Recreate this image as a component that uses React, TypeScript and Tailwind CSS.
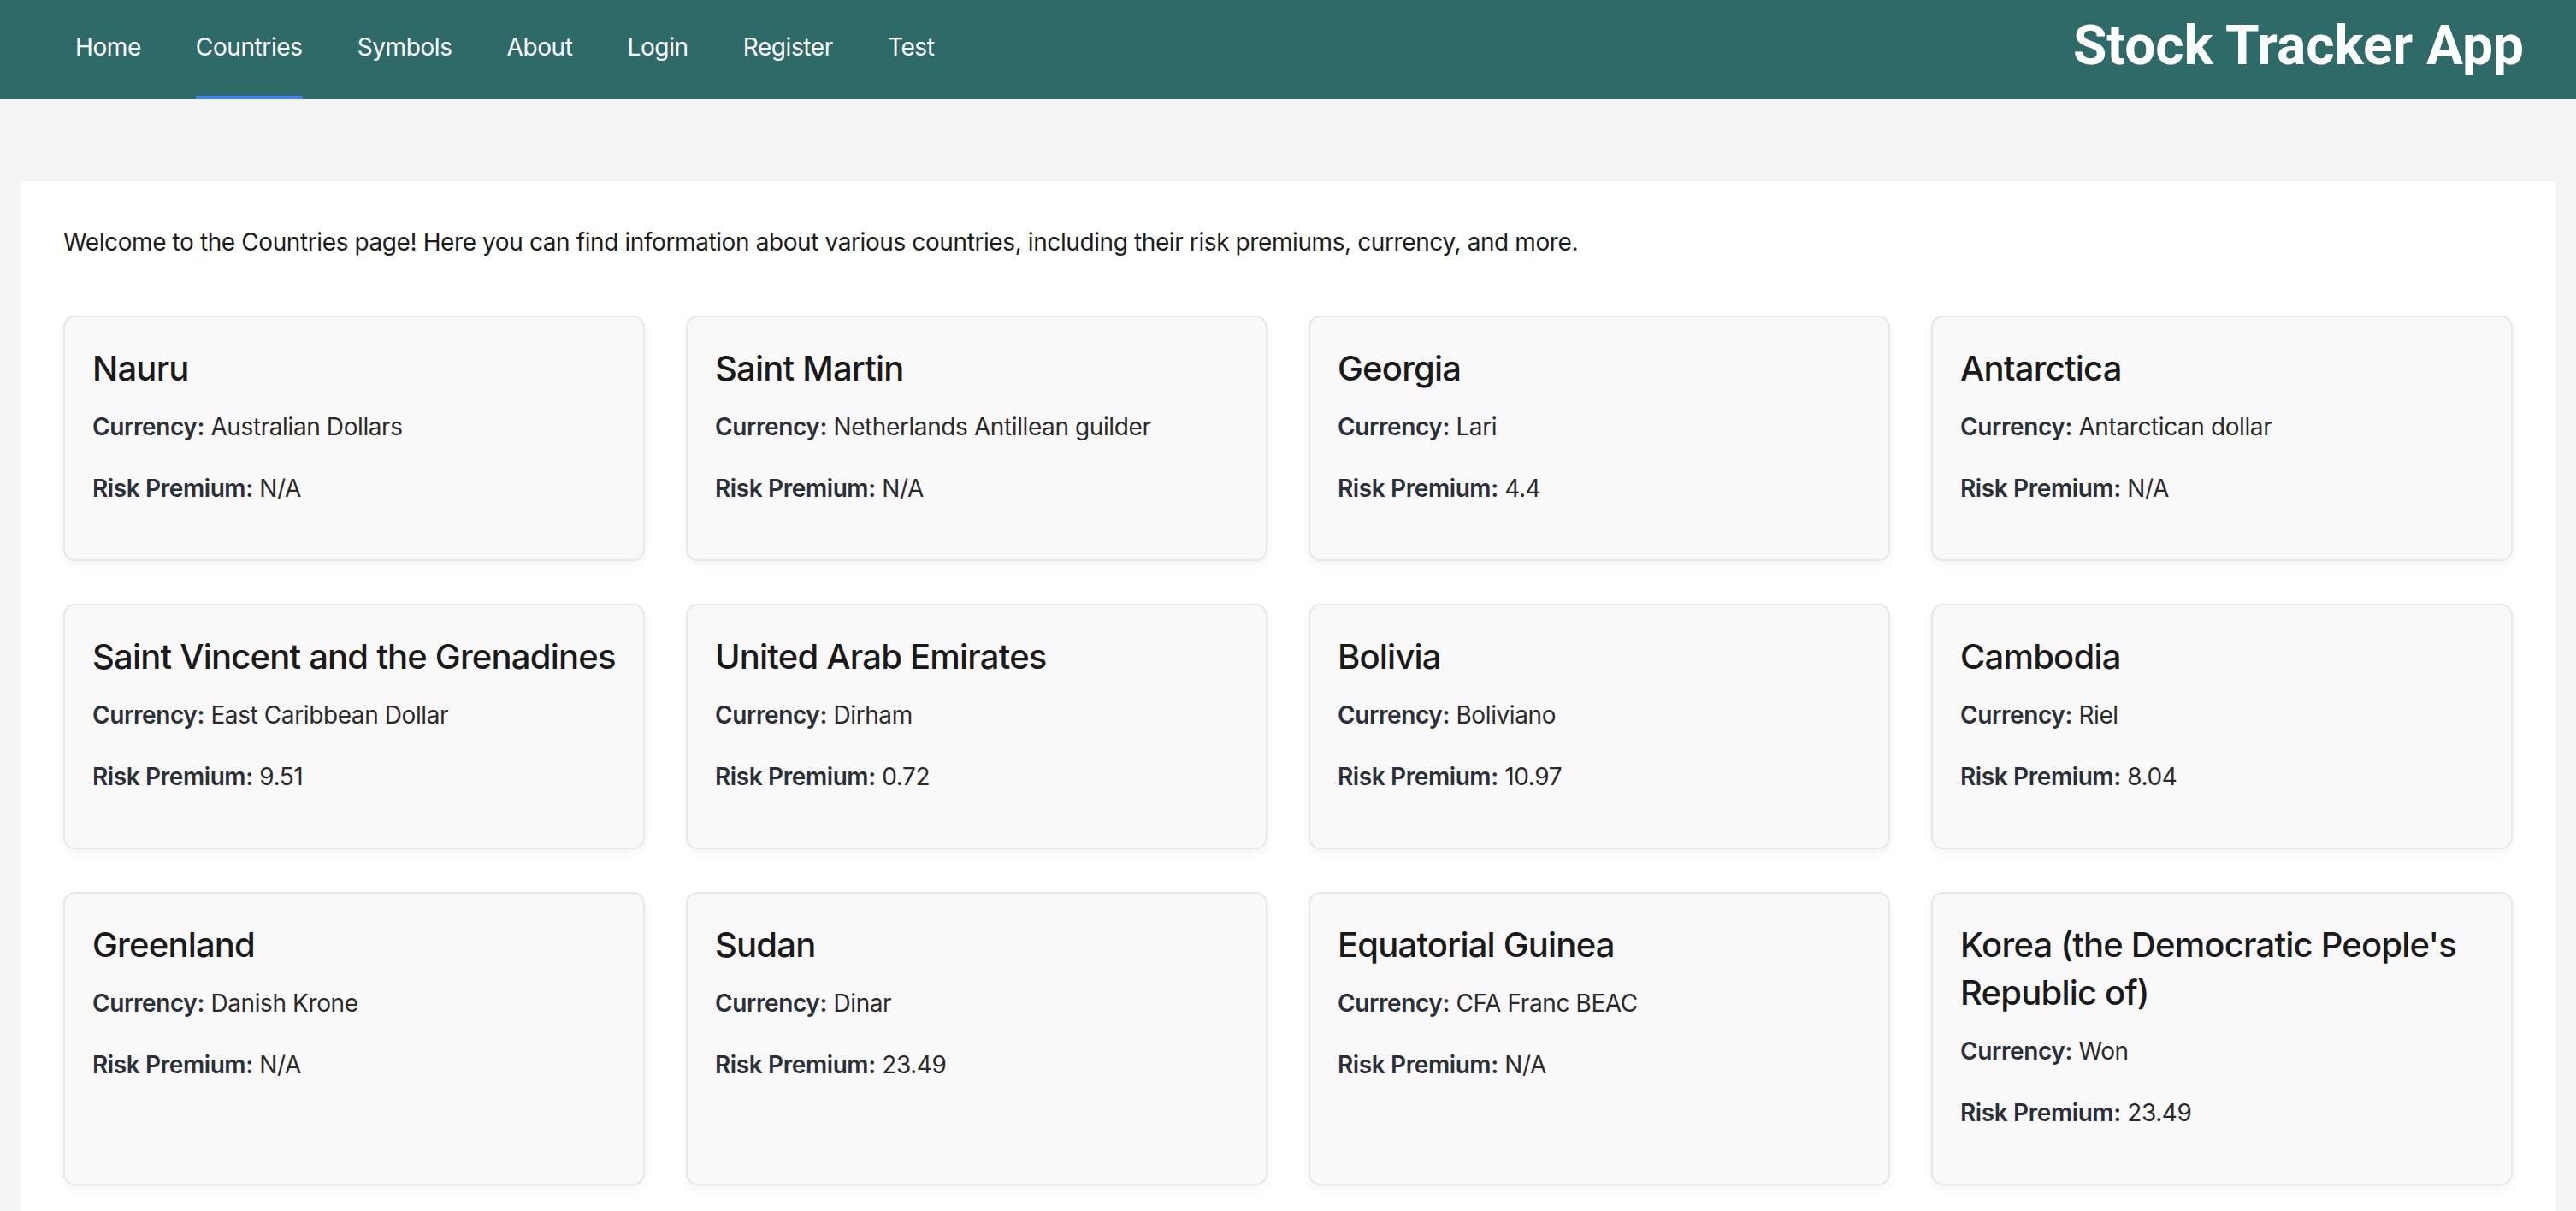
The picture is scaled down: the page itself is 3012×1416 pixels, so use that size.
import React from "react";

type Country = { name: string; currency: string; risk: string };

const countries: Country[] = [
  { name: "Nauru", currency: "Australian Dollars", risk: "N/A" },
  { name: "Saint Martin", currency: "Netherlands Antillean guilder", risk: "N/A" },
  { name: "Georgia", currency: "Lari", risk: "4.4" },
  { name: "Antarctica", currency: "Antarctican dollar", risk: "N/A" },
  { name: "Saint Vincent and the Grenadines", currency: "East Caribbean Dollar", risk: "9.51" },
  { name: "United Arab Emirates", currency: "Dirham", risk: "0.72" },
  { name: "Bolivia", currency: "Boliviano", risk: "10.97" },
  { name: "Cambodia", currency: "Riel", risk: "8.04" },
  { name: "Greenland", currency: "Danish Krone", risk: "N/A" },
  { name: "Sudan", currency: "Dinar", risk: "23.49" },
  { name: "Equatorial Guinea", currency: "CFA Franc BEAC", risk: "N/A" },
  { name: "Korea (the Democratic People's Republic of)", currency: "Won", risk: "23.49" },
];

const links = ["Home", "Countries", "Symbols", "About", "Login", "Register", "Test"];

export default function App() {
  return (
    <div className="min-h-screen bg-[#f4f4f4] font-['Inter',sans-serif]">
      <header className="h-[116px] bg-[#2e6b68] flex items-stretch justify-between pl-[88px] pr-[61px]">
        <nav className="flex items-stretch gap-[64px]">
          {links.map((l) => (
            <a
              key={l}
              className={
                "flex items-center pb-[3px] text-[28px] tracking-[-0.4px] text-white border-b-[4px] " +
                (l === "Countries" ? "border-[#3b82f6]" : "border-transparent")
              }
            >
              {l}
            </a>
          ))}
        </nav>
        <h1 className="flex items-center pb-[8px] font-['Roboto',sans-serif] text-[64px] font-bold text-white leading-none">
          Stock Tracker App
        </h1>
      </header>
      <main className="mx-[24px] mt-[96px] bg-white px-[50px] pt-[51px] pb-[40px]">
        <p className="text-[28px] leading-[40px] tracking-[-0.4px] text-[#1c1c1c]">
          Welcome to the Countries page! Here you can find information about various countries, including their risk premiums, currency, and more.
        </p>
        <div className="mt-[66px] grid grid-cols-4 gap-x-[48px] gap-y-[50px]">
          {countries.map((c) => (
            <div
              key={c.name}
              className="rounded-[14px] border-[2px] border-[#e8e8e8] bg-[#f9f9f9] px-[32px] pt-[32px] pb-[63px] shadow-[0_4px_12px_rgba(0,0,0,0.05)]"
            >
              <h2 className="text-[40px] leading-[56px] tracking-[-0.8px] font-medium text-[#1a1a1a]">{c.name}</h2>
              <p className="mt-[20px] text-[28px] leading-[40px] tracking-[-0.4px] text-[#2a2a2a]">
                <span className="font-semibold text-[#2b2f38]">Currency:</span> {c.currency}
              </p>
              <p className="mt-[32px] text-[28px] leading-[40px] tracking-[-0.4px] text-[#2a2a2a]">
                <span className="font-semibold text-[#2b2f38]">Risk Premium:</span> {c.risk}
              </p>
            </div>
          ))}
        </div>
      </main>
    </div>
  );
}
